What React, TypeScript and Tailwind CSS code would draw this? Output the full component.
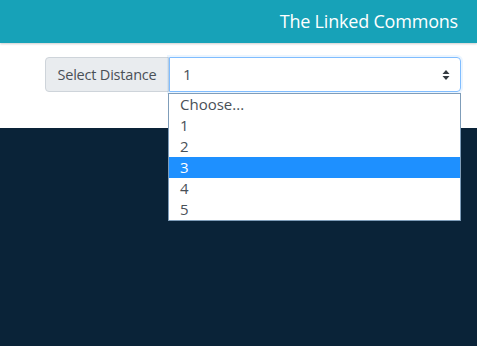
import { useState } from "react";

const options = ["Choose...", "1", "2", "3", "4", "5"];

export default function App() {
  const [hovered, setHovered] = useState(3);

  return (
    <div className="flex h-[346px] w-[477px] flex-col overflow-hidden bg-white font-['Open_Sans',sans-serif]">
      {/* top bar */}
      <header className="flex h-[43px] shrink-0 items-center justify-end bg-[#17a2b8] pr-[19px] shadow-[0_1px_2px_rgba(0,0,0,0.2)]">
        <span className="text-[18px] tracking-[-0.2px] text-white">The Linked Commons</span>
      </header>

      <div className="h-[85px] shrink-0 pl-[45px] pr-[16px] pt-[14px]">
        <div className="relative flex h-[35px]">
          <div className="flex w-[124px] items-center justify-center rounded-l-[4px] border border-[#ced4da] bg-[#e9ecef] text-[14.5px] tracking-[-0.2px] text-[#495057]">
            Select Distance
          </div>
          <div className="flex flex-1 items-center justify-between rounded-r-[4px] border border-[#80bdff] pl-[13px] pr-[10px] text-[15px] text-[#495057] shadow-[0_0_0_2px_rgba(0,123,255,0.08)]">
            <span>1</span>
            <svg width="8" height="12" viewBox="0 0 8 12" className="text-[#343a40]">
              <path d="M4 1 L7.5 5 H0.5 Z M4 11 L0.5 7 H7.5 Z" fill="currentColor" />
            </svg>
          </div>

          {/* open option list */}
          <ul className="absolute left-[123px] right-0 top-[36px] z-10 border border-[#7f9db9] bg-white text-[15px] leading-[21px] text-[#495057]">
            {options.map((o, i) => (
              <li
                key={o}
                onMouseEnter={() => setHovered(i)}
                className={
                  i === hovered
                    ? "h-[21px] bg-[#1e90ff] pl-[11px] text-white"
                    : "h-[21px] pl-[11px]"
                }
              >
                {o}
              </li>
            ))}
          </ul>
        </div>
      </div>

      <div className="flex-1 bg-[#0a2338]" />
    </div>
  );
}
